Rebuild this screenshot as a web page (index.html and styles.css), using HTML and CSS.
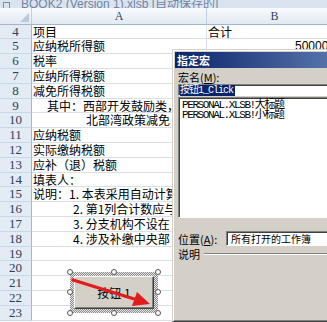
FILE: index.html
```html
<!DOCTYPE html>
<html lang="zh-CN">
<head>
  <meta charset="UTF-8" />
  <title>指定宏</title>
  <link rel="stylesheet" href="styles.css">
</head>
<body>
  <div class="titlebar"><span class="app-icon"></span><span class="doc-name">BOOK2 (Version 1).xlsb [自动保存的]</span></div>

  <div class="sheet">
    <div class="corner"></div><div class="colhead">A</div><div class="colhead">B</div>
    <div class="rowhead">4</div><div class="cell">项目</div><div class="cell">合计</div>
    <div class="rowhead">5</div><div class="cell">应纳税所得额</div><div class="cell num">500000</div>
    <div class="rowhead">6</div><div class="cell">税率</div><div class="cell"></div>
    <div class="rowhead">7</div><div class="cell">应纳所得税额</div><div class="cell"></div>
    <div class="rowhead">8</div><div class="cell">减免所得税额</div><div class="cell"></div>
    <div class="rowhead">9</div><div class="cell in1">其中：西部开发鼓励类，</div><div class="cell"></div>
    <div class="rowhead">10</div><div class="cell in2">北部湾政策减免</div><div class="cell"></div>
    <div class="rowhead">11</div><div class="cell">应纳税额</div><div class="cell"></div>
    <div class="rowhead">12</div><div class="cell">实际缴纳税额</div><div class="cell"></div>
    <div class="rowhead">13</div><div class="cell">应补（退）税额</div><div class="cell"></div>
    <div class="rowhead">14</div><div class="cell">填表人：</div><div class="cell"></div>
    <div class="rowhead">15</div><div class="cell">说明：1. 本表采用自动计算</div><div class="cell"></div>
    <div class="rowhead">16</div><div class="cell in3">2. 第1列合计数应与</div><div class="cell"></div>
    <div class="rowhead">17</div><div class="cell in3">3. 分支机构不设在</div><div class="cell"></div>
    <div class="rowhead">18</div><div class="cell in3">4. 涉及补缴中央部</div><div class="cell"></div>
    <div class="rowhead">19</div><div class="cell"></div><div class="cell"></div>
    <div class="rowhead">20</div><div class="cell"></div><div class="cell"></div>
    <div class="rowhead">21</div><div class="cell"></div><div class="cell"></div>
    <div class="rowhead">22</div><div class="cell"></div><div class="cell"></div>
    <div class="rowhead">23</div><div class="cell"></div><div class="cell"></div>
  </div>

  <!-- form control, selected -->
  <div class="form-button">
    <div class="face">按钮 1</div>
    <span class="handle h-tl"></span><span class="handle h-tm"></span><span class="handle h-tr"></span>
    <span class="handle h-ml"></span><span class="handle h-mr"></span>
    <span class="handle h-bl"></span><span class="handle h-bm"></span><span class="handle h-br"></span>
  </div>

  <svg class="arrow" viewBox="0 0 327 322" width="327" height="322">
    <line x1="73" y1="280" x2="136" y2="299.5" stroke="#e21c1c" stroke-width="3.2" stroke-linecap="round" />
    <polygon points="150,304 132,306 137,292" fill="#e21c1c" />
  </svg>

  <div class="dialog">
    <div class="dlg-title">指定宏</div>
    <div class="dlg-body">
      <div class="label">宏名(<u>M</u>):</div>
      <div class="textbox"><span class="selected">按钮1_Click</span></div>
      <div class="listbox">
        <div class="item">PERSONAL.XLSB!大标题</div>
        <div class="item">PERSONAL.XLSB!小标题</div>
      </div>
      <div class="location">
        <span class="loc-label">位置(<u>A</u>):</span>
        <div class="combo">所有打开的工作簿</div>
      </div>
      <div class="desc">
        <span>说明</span>
        <span class="groove"></span>
      </div>
    </div>
  </div>
</body>
</html>
```

FILE: styles.css
```css
body {
  margin: 0;
  width: 327px;
  height: 322px;
  overflow: hidden;
  position: relative;
  background: #fff;
  font-family: "Noto Sans CJK SC", sans-serif;
}

.titlebar {
  height: 8px;
  overflow: hidden;
  background: #dae4f1;
  display: flex;
  align-items: flex-end;
  gap: 11px;
  padding-left: 3px;
}

.app-icon {
  width: 7px;
  height: 8px;
  margin-bottom: -2px;
  border: 1px solid #7d8da6;
  box-sizing: border-box;
}

.doc-name {
  font: 12px/10px "Liberation Sans", "Noto Sans CJK SC", sans-serif;
  color: #7183a0;
  margin-bottom: -1px;
  white-space: nowrap;
}

.sheet {
  display: grid;
  grid-template-columns: 32px 175px 136px;
  grid-template-rows: 16.6px repeat(20, 14.8px);
}

.corner, .colhead {
  background: linear-gradient(#f8fafd, #e2e9f2);
  border-right: 1px solid #c3d0e0;
  border-bottom: 1px solid #9eb6ce;
  box-sizing: border-box;
}

.corner {
  position: relative;
}

.corner::after {
  content: "";
  position: absolute;
  right: 2px;
  bottom: 2px;
  border-left: 9px solid transparent;
  border-bottom: 9px solid #b9c8da;
}

.colhead {
  font: 12px/16px "Liberation Serif", serif;
  color: #33445e;
  text-align: center;
}

.rowhead {
  background: #e3ebf5;
  border-right: 1px solid #9eb6ce;
  border-bottom: 1px solid #c9d6e6;
  box-sizing: border-box;
  font: 13px/14px "Liberation Serif", serif;
  color: #2d3e58;
  text-align: center;
}

.cell {
  border-right: 1px solid #dadfe7;
  border-bottom: 1px solid #dadfe7;
  box-sizing: border-box;
  font-size: 12px;
  line-height: 14px;
  padding-left: 1px;
  white-space: nowrap;
  color: #000;
}

.cell.num {
  text-align: right;
  padding-right: 7px;
  font-family: "Liberation Sans", sans-serif;
}

.in1 { padding-left: 15px; }
.in2 { padding-left: 54px; }
.in3 { padding-left: 41px; }

.form-button {
  position: absolute;
  left: 70px;
  top: 272px;
  width: 88px;
  height: 41px;
  box-sizing: border-box;
  padding: 4px;
  background: repeating-conic-gradient(#8a8a8a 0 25%, #e8e8e8 0 50%) 0 0 / 2px 2px;
}

.face {
  height: 100%;
  box-sizing: border-box;
  background: #d4d0c8;
  border: 1px solid;
  border-color: #fff #404040 #404040 #fff;
  box-shadow: inset -1px -1px #808080;
  display: flex;
  align-items: center;
  justify-content: center;
  font-size: 12px;
  color: #000;
}

.handle {
  position: absolute;
  width: 6px;
  height: 6px;
  border-radius: 50%;
  background: #fff;
  border: 1px solid #555;
  box-sizing: border-box;
}

.h-tl { left: -3px; top: -3px; }
.h-tm { left: 41px; top: -3px; }
.h-tr { right: -3px; top: -3px; }
.h-ml { left: -3px; top: 17px; }
.h-mr { right: -3px; top: 17px; }
.h-bl { left: -3px; bottom: -3px; }
.h-bm { left: 41px; bottom: -3px; }
.h-br { right: -3px; bottom: -3px; }

.arrow {
  position: absolute;
  left: 0;
  top: 0;
  pointer-events: none;
}

.dialog {
  position: absolute;
  left: 172px;
  top: 49px;
  width: 330px;
  height: 273px;
  box-sizing: border-box;
  background: #d4d0c8;
  border: 1px solid;
  border-color: #d4d0c8 #404040 #404040 #d4d0c8;
  box-shadow: inset 1px 1px #fff, inset -1px -1px #808080;
  padding: 2px;
  font-size: 10px;
  color: #000;
}

.dlg-title {
  height: 16px;
  line-height: 16px;
  padding-left: 2px;
  background: linear-gradient(to right, #0a246a, #a6caf0);
  color: #fff;
  font-weight: bold;
  font-size: 11px;
}

.dlg-body {
  display: flex;
  flex-direction: column;
  padding: 3px 0 0 3px;
}

.label {
  height: 12px;
  line-height: 12px;
  font-size: 11px;
}

.textbox, .listbox, .combo {
  background: #fff;
  border: 1px solid;
  border-color: #808080 #fff #fff #808080;
  box-shadow: inset 1px 1px #404040;
  box-sizing: border-box;
}

.textbox {
  margin-top: 1px;
  height: 12px;
  padding: 1px 0 0 1px;
  line-height: 10px;
  font-family: "Liberation Mono", "Noto Sans CJK SC", monospace;
  letter-spacing: -1px;
}

.selected {
  background: #0a246a;
  color: #fff;
  padding-right: 2px;
}

.listbox {
  margin-top: 1px;
  height: 121px;
  padding: 2px 3px;
  font-family: "Liberation Mono", "Noto Sans CJK SC", monospace;
  font-size: 11px;
  letter-spacing: -1.4px;
}

.item {
  line-height: 10px;
  white-space: nowrap;
}

.location {
  margin-top: 13px;
  display: flex;
  align-items: center;
  height: 15px;
  font-size: 11px;
}

.loc-label {
  width: 48px;
}

.combo {
  flex: 1;
  height: 15px;
  line-height: 12px;
  padding: 1px 0 0 4px;
  font-size: 10px;
}

.desc {
  margin-top: 2px;
  display: flex;
  align-items: center;
  height: 12px;
  gap: 4px;
  font-size: 11px;
}

.groove {
  flex: 1;
  border-top: 1px solid #808080;
  border-bottom: 1px solid #fff;
}
```
